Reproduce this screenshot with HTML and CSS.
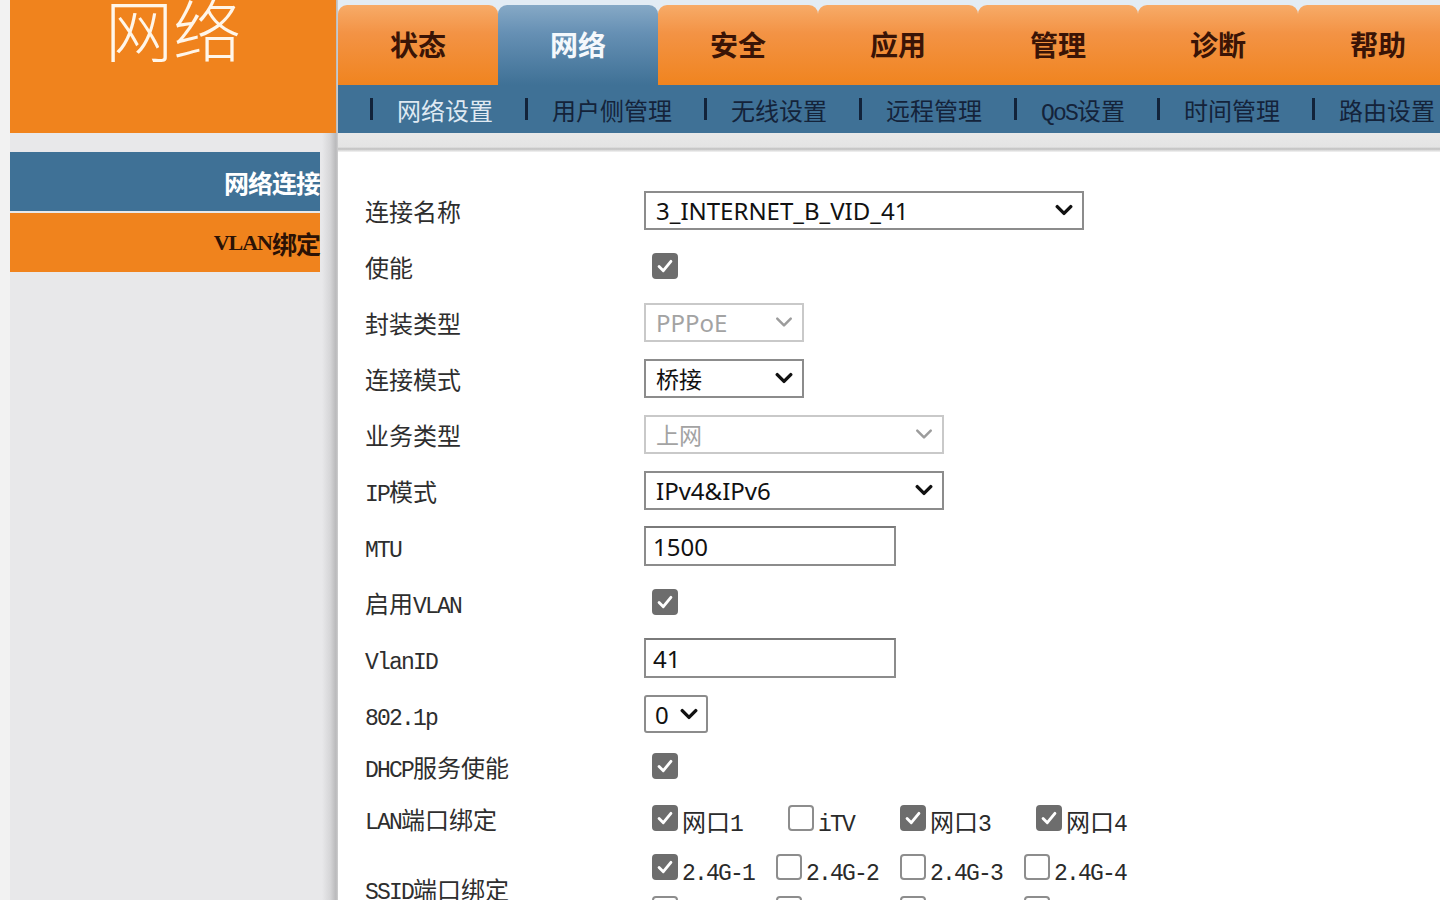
FILE: index.html
```html
<!DOCTYPE html>
<html lang="zh-CN">
<head>
<meta charset="utf-8">
<title>网络 - 网络连接</title>
<link rel="stylesheet" href="styles.css">
</head>
<body>
<div class="page">
  <aside class="left">
    <div class="brand"><span class="brand-title">网络</span></div>
    <nav class="side">
      <div class="side-item active">网络连接</div>
      <div class="side-item"><span class="side-en">VLAN</span>绑定</div>
    </nav>
  </aside>
  <main class="main">
    <div class="tabs">
      <div class="tab">状态</div>
      <div class="tab active">网络</div>
      <div class="tab">安全</div>
      <div class="tab">应用</div>
      <div class="tab">管理</div>
      <div class="tab">诊断</div>
      <div class="tab">帮助</div>
    </div>
    <div class="subnav">
      <span class="sep"></span><span class="sub active">网络设置</span>
      <span class="sep"></span><span class="sub">用户侧管理</span>
      <span class="sep"></span><span class="sub">无线设置</span>
      <span class="sep"></span><span class="sub">远程管理</span>
      <span class="sep"></span><span class="sub"><span class="en">QoS</span>设置</span>
      <span class="sep"></span><span class="sub">时间管理</span>
      <span class="sep"></span><span class="sub">路由设置</span>
    </div>
    <div class="strip"></div>
    <div class="content">
      <div class="row"><div class="label">连接名称</div>
        <div class="ctl"><div class="select w-name"><span>3_INTERNET_B_VID_41</span><svg class="chev" viewBox="0 0 16 10"><path d="M2 2 L8 8 L14 2"/></svg></div></div></div>
      <div class="row"><div class="label">使能</div>
        <div class="ctl"><span class="cb on"><svg viewBox="0 0 26 26"><path d="M6 13.5 L11 18.5 L20 7.5"/></svg></span></div></div>
      <div class="row"><div class="label">封装类型</div>
        <div class="ctl"><div class="select w-small disabled"><span>PPPoE</span><svg class="chev" viewBox="0 0 16 10"><path d="M2 2 L8 8 L14 2"/></svg></div></div></div>
      <div class="row"><div class="label">连接模式</div>
        <div class="ctl"><div class="select w-small"><span class="cjk">桥接</span><svg class="chev" viewBox="0 0 16 10"><path d="M2 2 L8 8 L14 2"/></svg></div></div></div>
      <div class="row"><div class="label">业务类型</div>
        <div class="ctl"><div class="select w-mid disabled"><span class="cjk">上网</span><svg class="chev" viewBox="0 0 16 10"><path d="M2 2 L8 8 L14 2"/></svg></div></div></div>
      <div class="row"><div class="label"><span class="en">IP</span>模式</div>
        <div class="ctl"><div class="select w-mid"><span>IPv4&amp;IPv6</span><svg class="chev" viewBox="0 0 16 10"><path d="M2 2 L8 8 L14 2"/></svg></div></div></div>
      <div class="row"><div class="label"><span class="en">MTU</span></div>
        <div class="ctl"><div class="input">1500</div></div></div>
      <div class="row"><div class="label">启用<span class="en">VLAN</span></div>
        <div class="ctl"><span class="cb on"><svg viewBox="0 0 26 26"><path d="M6 13.5 L11 18.5 L20 7.5"/></svg></span></div></div>
      <div class="row"><div class="label"><span class="en">VlanID</span></div>
        <div class="ctl"><div class="input">41</div></div></div>
      <div class="row"><div class="label"><span class="en">802.1p</span></div>
        <div class="ctl"><div class="select w-tiny"><span>0</span><svg class="chev" viewBox="0 0 16 10"><path d="M2 2 L8 8 L14 2"/></svg></div></div></div>
      <div class="row r-dhcp"><div class="label"><span class="en">DHCP</span>服务使能</div>
        <div class="ctl"><span class="cb on"><svg viewBox="0 0 26 26"><path d="M6 13.5 L11 18.5 L20 7.5"/></svg></span></div></div>
      <div class="row"><div class="label"><span class="en">LAN</span>端口绑定</div>
        <div class="ctl opts">
          <label class="opt o1"><span class="cb on"><svg viewBox="0 0 26 26"><path d="M6 13.5 L11 18.5 L20 7.5"/></svg></span><span class="ol">网口<span class="en">1</span></span></label>
          <label class="opt o2"><span class="cb"></span><span class="ol"><span class="en">iTV</span></span></label>
          <label class="opt o3"><span class="cb on"><svg viewBox="0 0 26 26"><path d="M6 13.5 L11 18.5 L20 7.5"/></svg></span><span class="ol">网口<span class="en">3</span></span></label>
          <label class="opt"><span class="cb on"><svg viewBox="0 0 26 26"><path d="M6 13.5 L11 18.5 L20 7.5"/></svg></span><span class="ol">网口<span class="en">4</span></span></label>
        </div></div>
      <div class="row r-ssid"><div class="label"><span class="en">SSID</span>端口绑定</div>
        <div class="ctl ssid">
          <div class="opts srow">
            <label class="opt s1"><span class="cb on"><svg viewBox="0 0 26 26"><path d="M6 13.5 L11 18.5 L20 7.5"/></svg></span><span class="ol"><span class="en">2.4G-1</span></span></label>
            <label class="opt s1"><span class="cb"></span><span class="ol"><span class="en">2.4G-2</span></span></label>
            <label class="opt s1"><span class="cb"></span><span class="ol"><span class="en">2.4G-3</span></span></label>
            <label class="opt"><span class="cb"></span><span class="ol"><span class="en">2.4G-4</span></span></label>
          </div>
          <div class="opts srow">
            <label class="opt s1"><span class="cb"></span><span class="ol"><span class="en">5G-1</span></span></label>
            <label class="opt s1"><span class="cb"></span><span class="ol"><span class="en">5G-2</span></span></label>
            <label class="opt s1"><span class="cb"></span><span class="ol"><span class="en">5G-3</span></span></label>
            <label class="opt"><span class="cb"></span><span class="ol"><span class="en">5G-4</span></span></label>
          </div>
        </div></div>
    </div>
  </main>
</div>
</body>
</html>
```
FILE: styles.css
```css
* { box-sizing: border-box; }
html, body { margin: 0; padding: 0; height: 100%; overflow: hidden; }
body {
  background: #f2f2f2;
  font-family: "Noto Sans CJK SC", "Noto Sans", sans-serif;
  color: #222;
}
.page { display: flex; width: 1440px; height: 900px; }

/* left column */
.left {
  width: 338px;
  flex: none;
  padding-left: 10px;
  background: linear-gradient(to right, #f2f2f2 0, #f2f2f2 10px, #e8e8ea 10px, #e8e8ea 322px, #d6d6d8 330px, #b9b9bb 336px, #cfcfd0 338px);
}
.brand {
  height: 133px;
  width: 326px;
  background: #f0831d;
  position: relative;
  overflow: hidden;
}
.brand-title {
  position: absolute;
  left: 95px;
  top: -6px;
  font-size: 68px;
  line-height: 1;
  font-weight: 300;
  color: #fff6ea;
}
.side { padding-top: 19px; width: 310px; }
.side-item {
  height: 59px;
  display: flex;
  align-items: center;
  justify-content: flex-end;
  font-size: 25px;
  font-weight: 700;
  color: #2b1205;
  background: #f0831d;
  letter-spacing: -1px;
}
.side-en { font-family: "Liberation Serif", serif; font-weight: 700; font-size: 22px; letter-spacing: -1px; }
.side-item.active {
  background: #3f7196;
  color: #ffffff;
  margin-bottom: 2px;
}

/* main */
.main { flex: 1; display: flex; flex-direction: column; min-width: 0; background: #fff; }
.tabs {
  flex: none;
  height: 85px;
  padding-top: 5px;
  display: flex;
  background: #e3ecf4;
  overflow: hidden;
}
.tab {
  width: 160px;
  flex: none;
  border-radius: 9px 9px 0 0;
  background: linear-gradient(to bottom, #f7ab68 0, #f39345 35%, #f0841f 100%);
  display: flex;
  align-items: center;
  justify-content: center;
  padding-bottom: 3px;
  font-size: 28px;
  font-weight: 700;
  color: #3a1406;
}
.tab.active {
  background: linear-gradient(to bottom, #86a9c6 0, #6690b4 35%, #3f7196 100%);
  color: #f4f8fc;
}
.subnav {
  flex: none;
  height: 48px;
  background: #3f7196;
  display: flex;
  align-items: center;
  padding-left: 32px;
  white-space: nowrap;
  overflow: hidden;
}
.sep {
  width: 3px;
  height: 22px;
  background: #12233a;
  flex: none;
}
.sub {
  margin-left: 24px;
  margin-right: 32px;
  font-size: 24px;
  color: #14233a;
  flex: none;
}
.sub.active { color: #dfe9f2; }
.strip {
  flex: none;
  height: 19px;
  background: linear-gradient(to bottom, #e8e8e8 0, #e4e4e4 14px, #bdbdbd 16px, #d5d5d5 17px, #f4f4f4 19px);
}

/* content */
.content { padding: 30px 0 0 27px; }
.row { display: flex; align-items: center; height: 56px; }
.row.r-dhcp { height: 48px; }
.row.r-ssid { height: 84px; }
.label {
  width: 279px;
  flex: none;
  font-size: 24px;
  color: #2e2e2e;
  white-space: nowrap;
}
.en { font-family: "Liberation Mono", monospace; font-size: 23px; letter-spacing: -1.8px; }
.ctl { display: flex; align-items: center; }

.select {
  height: 39px;
  border: 2px solid #8c8c8c;
  background: #fff;
  display: flex;
  align-items: center;
  justify-content: space-between;
  padding: 0 9px 0 10px;
  font-family: "Noto Sans", "Noto Sans CJK SC", sans-serif;
  font-size: 24px;
  color: #111;
}
.select .cjk { font-family: "Noto Sans CJK SC", sans-serif; font-size: 23px; }
.select .chev { width: 18px; height: 12px; flex: none; }
.select .chev path { fill: none; stroke: #111; stroke-width: 3; stroke-linecap: round; stroke-linejoin: round; }
.select.disabled { border-color: #c9c9c9; color: #a3a3a3; }
.select.disabled .chev path { stroke: #9c9c9c; stroke-width: 2.2; }
.w-name { width: 440px; }
.w-small { width: 160px; }
.w-mid { width: 300px; }
.w-tiny { width: 64px; height: 38px; padding: 0 8px 0 9px; border-radius: 3px; }

.input {
  width: 252px;
  height: 40px;
  border: 2px solid #8c8c8c;
  border-top-color: #7a7a7a;
  background: #fff;
  display: flex;
  align-items: center;
  padding-left: 7px;
  font-family: "Noto Sans", sans-serif;
  font-size: 24px;
  color: #111;
}

.cb {
  width: 26px;
  height: 26px;
  border: 2px solid #8d8d8d;
  border-radius: 4px;
  background: #fff;
  margin-left: 8px;
  flex: none;
  display: inline-flex;
}
.cb.on { background: #6d6d6d; border-color: #6d6d6d; }
.cb svg { width: 22px; height: 22px; }
.cb svg path { fill: none; stroke: #fff; stroke-width: 3.4; stroke-linecap: round; stroke-linejoin: round; }

.opts { display: flex; align-items: center; }
.opt { display: flex; align-items: center; width: 124px; }
.opt.o1 { width: 136px; }
.opt.o2 { width: 112px; }
.opt.o3 { width: 136px; }
.opt.s1 { width: 124px; }
.ol { font-size: 24px; color: #2a2a2a; margin-left: 4px; margin-top: 4px; white-space: nowrap; }
.ssid { flex-direction: column; align-items: flex-start; }
.srow { height: 42px; }
```
